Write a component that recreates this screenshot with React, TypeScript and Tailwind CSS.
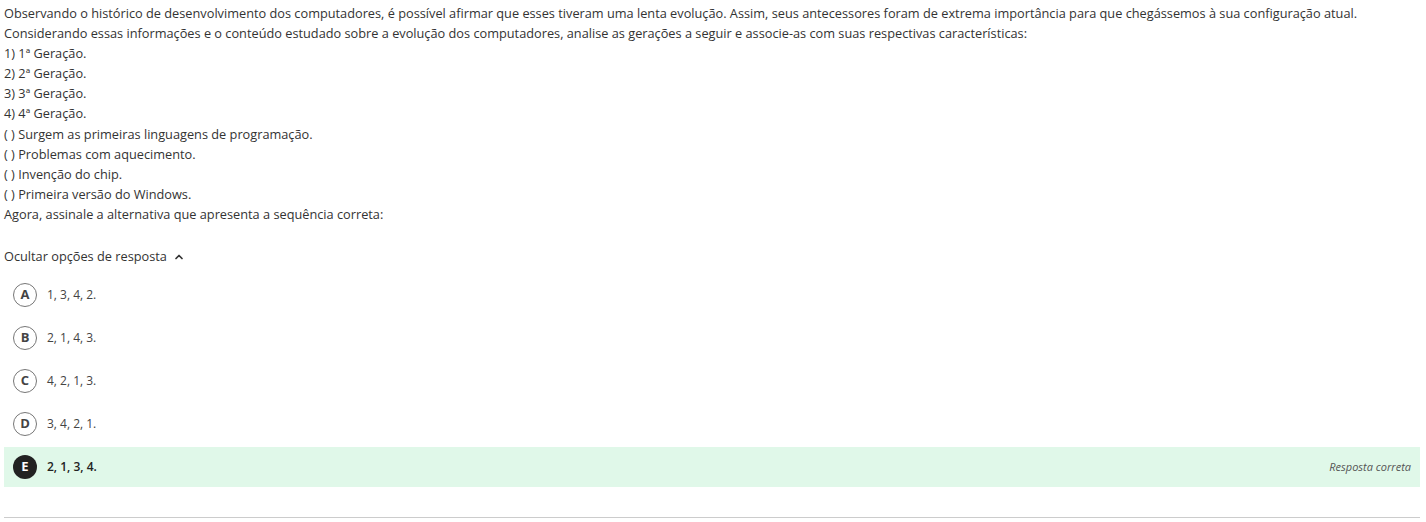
import { ChevronUp } from "lucide-react";

const lines = [
  "Observando o histórico de desenvolvimento dos computadores, é possível afirmar que esses tiveram uma lenta evolução. Assim, seus antecessores foram de extrema importância para que chegássemos à sua configuração atual.",
  "Considerando essas informações e o conteúdo estudado sobre a evolução dos computadores, analise as gerações a seguir e associe-as com suas respectivas características:",
  "1) 1ª Geração.",
  "2) 2ª Geração.",
  "3) 3ª Geração.",
  "4) 4ª Geração.",
  "( ) Surgem as primeiras linguagens de programação.",
  "( ) Problemas com aquecimento.",
  "( ) Invenção do chip.",
  "( ) Primeira versão do Windows.",
  "Agora, assinale a alternativa que apresenta a sequência correta:",
];

const options = [
  { letter: "A", text: "1, 3, 4, 2." },
  { letter: "B", text: "2, 1, 4, 3." },
  { letter: "C", text: "4, 2, 1, 3." },
  { letter: "D", text: "3, 4, 2, 1." },
  { letter: "E", text: "2, 1, 3, 4.", correct: true },
];

export default function App() {
  return (
    <div className="bg-white min-h-screen px-1 pt-[3px] text-[12.75px] text-[#333] font-['Open_Sans',sans-serif]">
      <div className="leading-[20.1px]">
        {lines.map((l, i) => (
          <p key={i}>{l}</p>
        ))}
      </div>

      <button className="mt-[23px] flex items-center gap-1 h-5 text-[#333]">
        Ocultar opções de resposta
        <ChevronUp size={12} strokeWidth={3.5} className="ml-[2px]" />
      </button>

      <div className="mt-2 flex flex-col gap-[3px] w-[1416px] text-[12px]">
        {options.map((o) => (
          <div
            key={o.letter}
            className={`h-10 flex items-center pl-[9px] pr-[9px] ${o.correct ? "bg-[#e0f8e9]" : ""}`}
          >
            <span
              className={`w-6 h-6 rounded-full flex items-center justify-center text-[13px] font-bold ${
                o.correct ? "bg-[#222] text-white" : "border border-[#777] text-[#444]"
              }`}
            >
              {o.letter}
            </span>
            <span className={`ml-[10px] ${o.correct ? "text-[#222] font-semibold" : "text-[#444] font-medium"}`}>{o.text}</span>
            {o.correct && (
              <span className="ml-auto italic text-[11px] text-[#555]">Resposta correta</span>
            )}
          </div>
        ))}
      </div>

      <div className="mt-[30px] w-[1416px] border-t border-[#ccc]" />
    </div>
  );
}
